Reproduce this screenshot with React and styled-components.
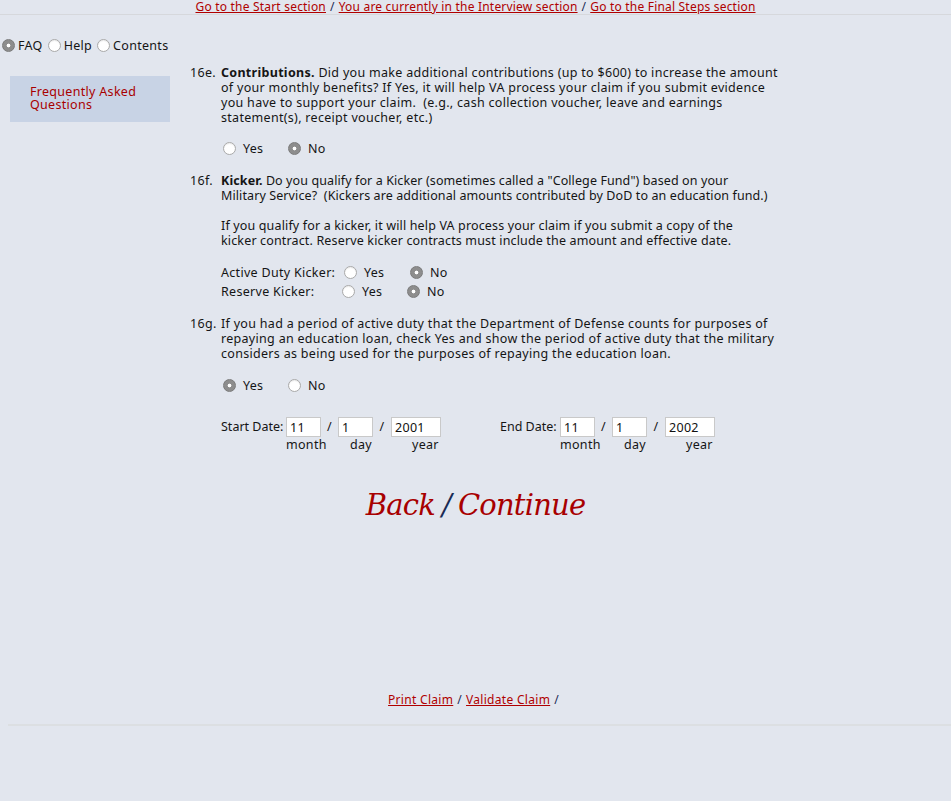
import React from "react";
import styled, { createGlobalStyle } from "styled-components";

const Global = createGlobalStyle`
  html, body { margin: 0; padding: 0; background: #e2e6ee; }
  body { font-family: "Noto Sans", "DejaVu Sans", sans-serif; font-size: 12.5px; letter-spacing: 0.3px; color: #151515; }
`;

const Page = styled.div`
  width: 951px;
  min-height: 801px;
  background: #e2e6ee;
`;

const TopNav = styled.div`
  height: 14px;
  line-height: 14px;
  text-align: center;
  font-size: 12px;
  letter-spacing: 0.2px;
  border-bottom: 1px solid #d6d8dc;
  white-space: nowrap;
`;

const Link = styled.a`
  color: #b00000;
  text-decoration: underline;
  cursor: pointer;
`;

const Sep = styled.span`
  color: #1a2a55;
  margin: 0 4px;
`;

const BigSep = styled.span`
  color: #1a2a55;
  margin: 0 7px;
`;

const ModeRow = styled.div`
  display: flex;
  align-items: center;
  margin-top: 22px;
  padding-left: 2px;
  height: 16px;
`;

const ModeItem = styled.label`
  display: flex;
  align-items: center;
  gap: 3px;
  margin-right: 5px;
`;

const Radio = styled.span`
  display: inline-block;
  box-sizing: border-box;
  width: 13px;
  height: 13px;
  border-radius: 50%;
  flex: none;
  ${(p) =>
    p.$on
      ? `background: radial-gradient(circle, #ffffff 0 1.6px, #8d8d8d 2.2px);
         border: 1px solid #7a7a7a;`
      : `background: #ffffff; border: 1px solid #a9a9a9;
         box-shadow: inset 0 1px 1px rgba(0,0,0,0.08);`}
`;

const Body = styled.div`
  display: flex;
  margin-top: 12px;
`;

const Sidebar = styled.div`
  width: 160px;
  margin-left: 10px;
  margin-right: 20px;
  flex: none;
`;

const FaqBox = styled.div`
  margin-top: 11px;
  background: #c8d3e5;
  height: 46px;
  box-sizing: border-box;
  padding: 9px 20px 0;
  line-height: 13px;
  color: #a80000;
`;

const Main = styled.div`
  flex: 1;
`;

const Question = styled.div`
  display: flex;
`;

const Num = styled.div`
  width: 31px;
  flex: none;
  line-height: 15px;
`;

const QBody = styled.div`
  width: 580px;
  line-height: 15px;
  white-space: nowrap;
`;

const Para = styled.p`
  margin: 0 0 ${(p) => p.$mb || 0}px;
  letter-spacing: ${(p) => p.$ls ?? 0.3}px;
`;

const Options = styled.div`
  display: flex;
  align-items: center;
  height: 19px;
  margin: ${(p) => p.$mt || 0}px 0 ${(p) => p.$mb || 0}px ${(p) => p.$ml ?? 2}px;
`;

const Opt = styled.label`
  display: flex;
  align-items: center;
  gap: 7px;
  width: ${(p) => p.$w || 65}px;
`;

const KickerLabel = styled.span`
  width: ${(p) => p.$w}px;
  flex: none;
`;

const DateRow = styled.div`
  display: flex;
  margin-top: 22px;
`;

const DateGroup = styled.div`
  display: flex;
  align-items: flex-start;
  width: ${(p) => p.$w}px;
  flex: none;
`;

const DateLabel = styled.span`
  width: ${(p) => p.$w}px;
  flex: none;
  line-height: 20px;
  letter-spacing: 0;
`;

const Field = styled.div`
  display: flex;
  flex-direction: column;
  width: ${(p) => p.$w}px;
  flex: none;
`;

const Input = styled.input`
  box-sizing: border-box;
  width: 100%;
  height: 20px;
  border: 1px solid #c9c9c9;
  background: #fff;
  font: inherit;
  letter-spacing: inherit;
  color: #111;
  padding: 0 0 0 3px;
  outline: none;
`;

const Sub = styled.span`
  line-height: 16px;
  white-space: nowrap;
  padding-left: ${(p) => p.$pl || 0}px;
`;

const Slash = styled.span`
  width: ${(p) => p.$w}px;
  flex: none;
  text-align: center;
  line-height: 20px;
`;

const NavBig = styled.div`
  text-align: center;
  font-family: "DejaVu Serif", Georgia, serif;
  font-style: italic;
  font-size: 29px;
  margin-top: 35px;
  letter-spacing: -0.8px;
`;

const BigLink = styled.a`
  color: #a80000;
  text-decoration: none;
  cursor: pointer;
`;

const Footer = styled.div`
  text-align: center;
  margin-top: 170px;
  line-height: 16px;
  font-size: 12px;
  letter-spacing: 0.3px;
`;

const BottomRule = styled.div`
  margin: 16px 0 0 8px;
  border-top: 2px solid #dcdfe2;
`;

function Lines({ lines }) {
  return lines.map((l, i) => (
    <React.Fragment key={i}>
      {l}
      {i < lines.length - 1 && <br />}
    </React.Fragment>
  ));
}

function DateSet({ label, labelW, vals, w }) {
  return (
    <DateGroup $w={w}>
      <DateLabel $w={labelW}>{label}</DateLabel>
      <Field $w={35}>
        <Input defaultValue={vals[0]} />
        <Sub>month</Sub>
      </Field>
      <Slash $w={17}>/</Slash>
      <Field $w={35}>
        <Input defaultValue={vals[1]} />
        <Sub $pl={12}>day</Sub>
      </Field>
      <Slash $w={18}>/</Slash>
      <Field $w={50}>
        <Input defaultValue={vals[2]} />
        <Sub $pl={21}>year</Sub>
      </Field>
    </DateGroup>
  );
}

export default function App() {
  return (
    <Page>
      <Global />
      <TopNav>
        <Link>Go to the Start section</Link>
        <Sep>/</Sep>
        <Link>You are currently in the Interview section</Link>
        <Sep>/</Sep>
        <Link>Go to the Final Steps section</Link>
      </TopNav>
      <ModeRow>
        <ModeItem><Radio $on />FAQ</ModeItem>
        <ModeItem><Radio />Help</ModeItem>
        <ModeItem><Radio />Contents</ModeItem>
      </ModeRow>
      <Body>
        <Sidebar>
          <FaqBox>Frequently Asked Questions</FaqBox>
        </Sidebar>
        <Main>
          <Question>
            <Num>16e.</Num>
            <QBody>
              <Para>
                <b>Contributions.</b>{" "}
                <Lines
                  lines={[
                    "Did you make additional contributions (up to $600) to increase the amount",
                    "of your monthly benefits? If Yes, it will help VA process your claim if you submit evidence",
                    "you have to support your claim.\u00a0 (e.g., cash collection voucher, leave and earnings",
                    "statement(s), receipt voucher, etc.)",
                  ]}
                />
              </Para>
              <Options $mt={14} $mb={15}>
                <Opt><Radio />Yes</Opt>
                <Opt><Radio $on />No</Opt>
              </Options>
            </QBody>
          </Question>
          <Question>
            <Num>16f.</Num>
            <QBody>
              <Para $mb={15} $ls={0.1}>
                <b>Kicker.</b>{" "}
                <Lines
                  lines={[
                    "Do you qualify for a Kicker (sometimes called a \"College Fund\") based on your",
                    "Military Service?\u00a0 (Kickers are additional amounts contributed by DoD to an education fund.)",
                  ]}
                />
              </Para>
              <Para $ls={0.15}>
                <Lines
                  lines={[
                    "If you qualify for a kicker, it will help VA process your claim if you submit a copy of the",
                    "kicker contract. Reserve kicker contracts must include the amount and effective date.",
                  ]}
                />
              </Para>
              <Options $mt={15} $ml={0}>
                <KickerLabel $w={123}>Active Duty Kicker:</KickerLabel>
                <Opt $w={66}><Radio />Yes</Opt>
                <Opt><Radio $on />No</Opt>
              </Options>
              <Options $ml={0} $mb={15}>
                <KickerLabel $w={121}>Reserve Kicker:</KickerLabel>
                <Opt $w={65}><Radio />Yes</Opt>
                <Opt><Radio $on />No</Opt>
              </Options>
            </QBody>
          </Question>
          <Question>
            <Num>16g.</Num>
            <QBody>
              <Para>
                <Lines
                  lines={[
                    "If you had a period of active duty that the Department of Defense counts for purposes of",
                    "repaying an education loan, check Yes and show the period of active duty that the military",
                    "considers as being used for the purposes of repaying the education loan.",
                  ]}
                />
              </Para>
              <Options $mt={15}>
                <Opt><Radio $on />Yes</Opt>
                <Opt><Radio />No</Opt>
              </Options>
              <DateRow>
                <DateSet label="Start Date:" labelW={65} vals={["11", "1", "2001"]} w={279} />
                <DateSet label="End Date:" labelW={60} vals={["11", "1", "2002"]} w={260} />
              </DateRow>
            </QBody>
          </Question>
        </Main>
      </Body>
      <NavBig>
        <BigLink>Back</BigLink>
        <BigSep>/</BigSep>
        <BigLink>Continue</BigLink>
      </NavBig>
      <Footer>
        <Link>Print Claim</Link>
        <Sep>/</Sep>
        <Link>Validate Claim</Link>
        <Sep>/</Sep>
      </Footer>
      <BottomRule />
    </Page>
  );
}
